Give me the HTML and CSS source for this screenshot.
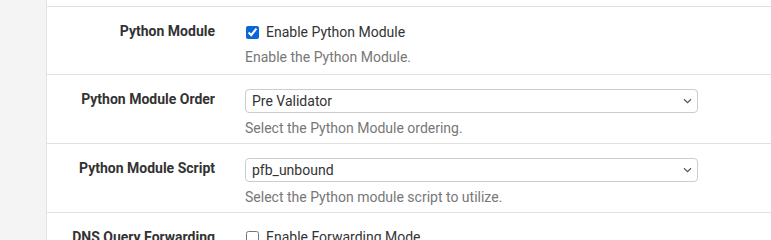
FILE: index.html
```html
<!DOCTYPE html>
<html lang="en">
<head>
	<meta charset="UTF-8">
	<title>DNS Resolver</title>
	<link rel="stylesheet" href="styles.css">
</head>
<body>
<div class="page">
	<div class="side"></div>
	<div class="main">
		<div class="prev"></div>

		<div class="row row_first">
			<div class="label">Python Module</div>
			<div class="ctrl">
				<label class="chk"><input type="checkbox" checked> Enable Python Module</label>
				<div class="help help_first">Enable the Python Module.</div>
			</div>
		</div>

		<div class="row">
			<div class="label">Python Module Order</div>
			<div class="ctrl">
				<div class="sel">
					<select>
						<option>Pre Validator</option>
						<option>Post Validator</option>
					</select>
					<svg class="arrow" width="9" height="6" viewBox="0 0 9 6"><path d="M1 1.2 L4.5 4.6 L8 1.2" fill="none" stroke="#555" stroke-width="1.2"/></svg>
				</div>
				<div class="help">Select the Python Module ordering.</div>
			</div>
		</div>

		<div class="row">
			<div class="label">Python Module Script</div>
			<div class="ctrl">
				<div class="sel">
					<select>
						<option>pfb_unbound</option>
					</select>
					<svg class="arrow" width="9" height="6" viewBox="0 0 9 6"><path d="M1 1.2 L4.5 4.6 L8 1.2" fill="none" stroke="#555" stroke-width="1.2"/></svg>
				</div>
				<div class="help">Select the Python module script to utilize.</div>
			</div>
		</div>

		<div class="row">
			<div class="label">DNS Query Forwarding</div>
			<div class="ctrl">
				<label class="chk"><input type="checkbox"> Enable Forwarding Mode</label>
			</div>
		</div>
	</div>
</div>
</body>
</html>
```

FILE: styles.css
```css
html, body { margin: 0; padding: 0; background: #fff; }
body { font: 14px/20px Roboto, "Liberation Sans", Arial, sans-serif; color: #333; overflow: hidden; }

.page { display: flex; height: 240px; }
.side { width: 46px; background: #f4f4f4; border-right: 1px solid #e3e3e3; flex: none; }
.main { flex: 1; }
.prev { height: 6px; }

.row { display: flex; border-top: 1px solid #e0e0e0; height: 68px; }
.row_first { height: 67px; }

.label { width: 168px; padding: 14px 15px 0 0; text-align: right; font-weight: 700; color: #333; }
.ctrl { width: 453px; padding: 14px 0 0 15px; }
.row_first .ctrl { padding-top: 15px; }

.chk { display: flex; align-items: center; color: #333; }
.chk input { width: 13px; height: 13px; margin: 0 7px 0 1px; accent-color: #0b66d9; }

.help { color: #777; margin-top: 5px; }
.help_first { margin-top: 5px; }

.sel { position: relative; height: 24px; }
.sel select { appearance: none; -webkit-appearance: none; width: 100%; height: 24px; margin: 0; padding: 0 24px 0 6px; border: 1px solid #ccc; border-radius: 4px; background: #fff; font: 14px/22px Roboto, "Liberation Sans", Arial, sans-serif; color: #333; }
.sel .arrow { position: absolute; right: 6px; top: 9px; }
```
